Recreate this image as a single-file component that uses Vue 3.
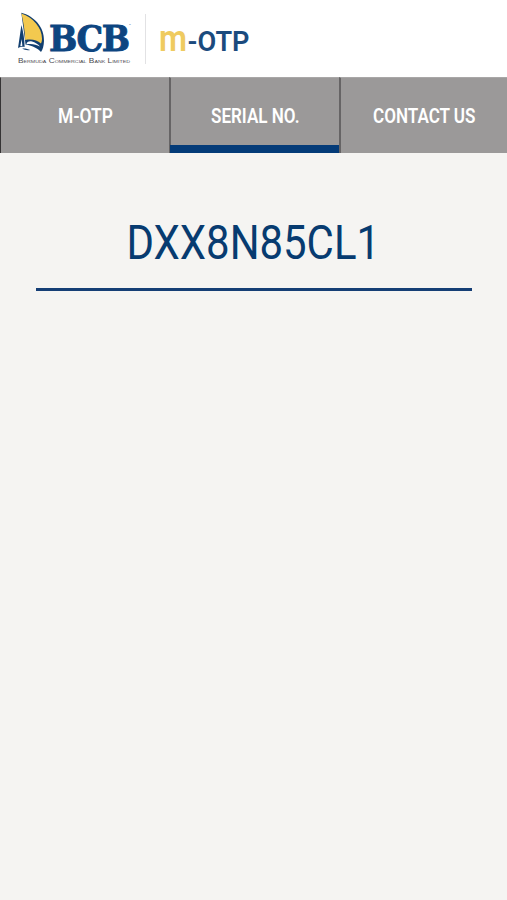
<template>
    <div class="app">
        <header class="header">
            <svg class="logo" viewBox="0 0 145 77" role="img" aria-label="BCB">
                <!-- sail -->
                <path class="navy" d="M21.3 12.8 C34 16 44.5 27 44 41 C43.8 46 42.8 49.5 41 52 C38 48.8 33 45.6 25.5 44.6 L25 40 Z" />
                <path class="yellow" d="M21.4 13.4 C33 17.5 42 27.5 42 38.5 C42 40.5 41.7 42 41 43.5 C37 40.3 32 38.6 25.2 40 C25 31 23.4 22 21.4 13.4 Z" />
                <path class="white" d="M26.5 44.2 C26.5 42 29 40.9 32 41.5 C35 42.2 38 44.2 40 46.5 C36 44.4 32 43.4 26.5 44.2 Z" />
                <path class="navy" d="M21.4 25 L18 48.3 C19.5 47 21.5 46.5 24.6 47 C24.6 40 23.4 32 21.4 25 Z" />
                <path class="white" d="M21.6 39 L20.3 46.2 L22.4 45.8 Z" />
                <path class="navy" d="M22.2 48.5 C25 48.2 28 48.8 30.2 50 C27 50.5 24.5 50 22.2 48.5 Z" />
                <text class="brand" x="49" y="50.7" textLength="79.5" lengthAdjust="spacingAndGlyphs">BCB</text>
                <text class="tm" x="129" y="26">™</text>
                <text class="tagline" x="18" y="62.5" textLength="112" lengthAdjust="spacingAndGlyphs">Bermuda Commercial Bank Limited</text>
            </svg>
            <span class="divider"></span>
            <svg class="title" viewBox="0 0 120 77" role="img" aria-label="m-OTP">
                <text class="title-m" x="13" y="51" textLength="28" lengthAdjust="spacingAndGlyphs">m</text>
                <text class="title-otp" x="41.5" y="51" textLength="62" lengthAdjust="spacingAndGlyphs">-OTP</text>
            </svg>
        </header>

        <nav class="tabs">
            <button
                v-for="tab in tabs"
                :key="tab.id"
                class="tab"
                :class="{ active: current === tab.id }"
                @click="current = tab.id"
            >
                <svg class="tab-label" :width="tab.width" height="24">
                    <text x="0" y="19" :textLength="tab.width" lengthAdjust="spacingAndGlyphs">{{ tab.label }}</text>
                </svg>
            </button>
        </nav>

        <main class="content">
            <svg class="serial" viewBox="0 0 436 76">
                <text x="90.5" y="47.2" textLength="253.5" lengthAdjust="spacingAndGlyphs">{{ serial }}</text>
            </svg>
        </main>
    </div>
</template>

<script setup>
import { ref } from 'vue'

const serial = 'DXX8N85CL1'
const current = ref('serial')

// width: condensed label width in px
const tabs = [
    { id: 'otp', label: 'M-OTP', width: 55 },
    { id: 'serial', label: 'SERIAL NO.', width: 88.5 },
    { id: 'contact', label: 'CONTACT US', width: 102.5 },
]
</script>

<style>
body {
    background: #f5f4f2;
}
</style>

<style scoped>
.app {
    min-height: 100vh;
    background: #f5f4f2;
    font-family: Roboto, 'Liberation Sans', sans-serif;
}

.header {
    display: flex;
    align-items: center;
    height: 77px;
    background: #fff;
}

.logo {
    width: 145px;
    height: 77px;
}

.navy {
    fill: #123f70;
}

.yellow {
    fill: #f3c94f;
}

.white {
    fill: #fff;
}

.brand {
    font: bold 34.5px 'DejaVu Serif', serif;
    letter-spacing: -1.5px;
    fill: #0d4580;
    stroke: #0d4580;
    stroke-width: 0.9px;
}

.tm {
    font-size: 3px;
    fill: #0d4580;
}

.tagline {
    font: 6.3px 'Liberation Sans', sans-serif;
    font-variant: small-caps;
    fill: #4b4b50;
}

.divider {
    width: 1px;
    height: 50px;
    background: #e2e2e4;
}

.title {
    width: 120px;
    height: 77px;
}

.title-m {
    font-size: 37px;
    font-weight: 600;
    fill: #efcb60;
}

.title-otp {
    font-size: 28.5px;
    font-weight: 600;
    fill: #1b4b7e;
}

.tabs {
    display: grid;
    grid-template-columns: 169px 170px 1fr;
    height: 76px;
}

.tab {
    position: relative;
    display: flex;
    align-items: center;
    justify-content: center;
    padding: 0;
    border: 0;
    border-left: 2px solid #666465;
    border-top: 1px solid #a9a7a7;
    background: #9b9999;
    cursor: pointer;
}

.tab:first-child {
    border-left: 1px solid #353334;
    padding-left: 1px;
}

/* underline covers the left separator too */
.tab.active::after {
    content: '';
    position: absolute;
    left: -1px;
    right: 0;
    bottom: 0;
    height: 8px;
    background: #043b78;
}

.tab-label {
    display: block;
    overflow: visible;
}

.tab-label text {
    font-family: Roboto, 'Liberation Sans', sans-serif;
    font-size: 19.5px;
    font-weight: 600;
    fill: #fff;
}

.content {
    margin: 59px 35px 0 36px;
    border-bottom: 3px solid #153e75;
}

.serial {
    display: block;
    width: 436px;
    height: 76px;
}

.serial text {
    font-size: 48px;
    fill: #073b70;
}
</style>
